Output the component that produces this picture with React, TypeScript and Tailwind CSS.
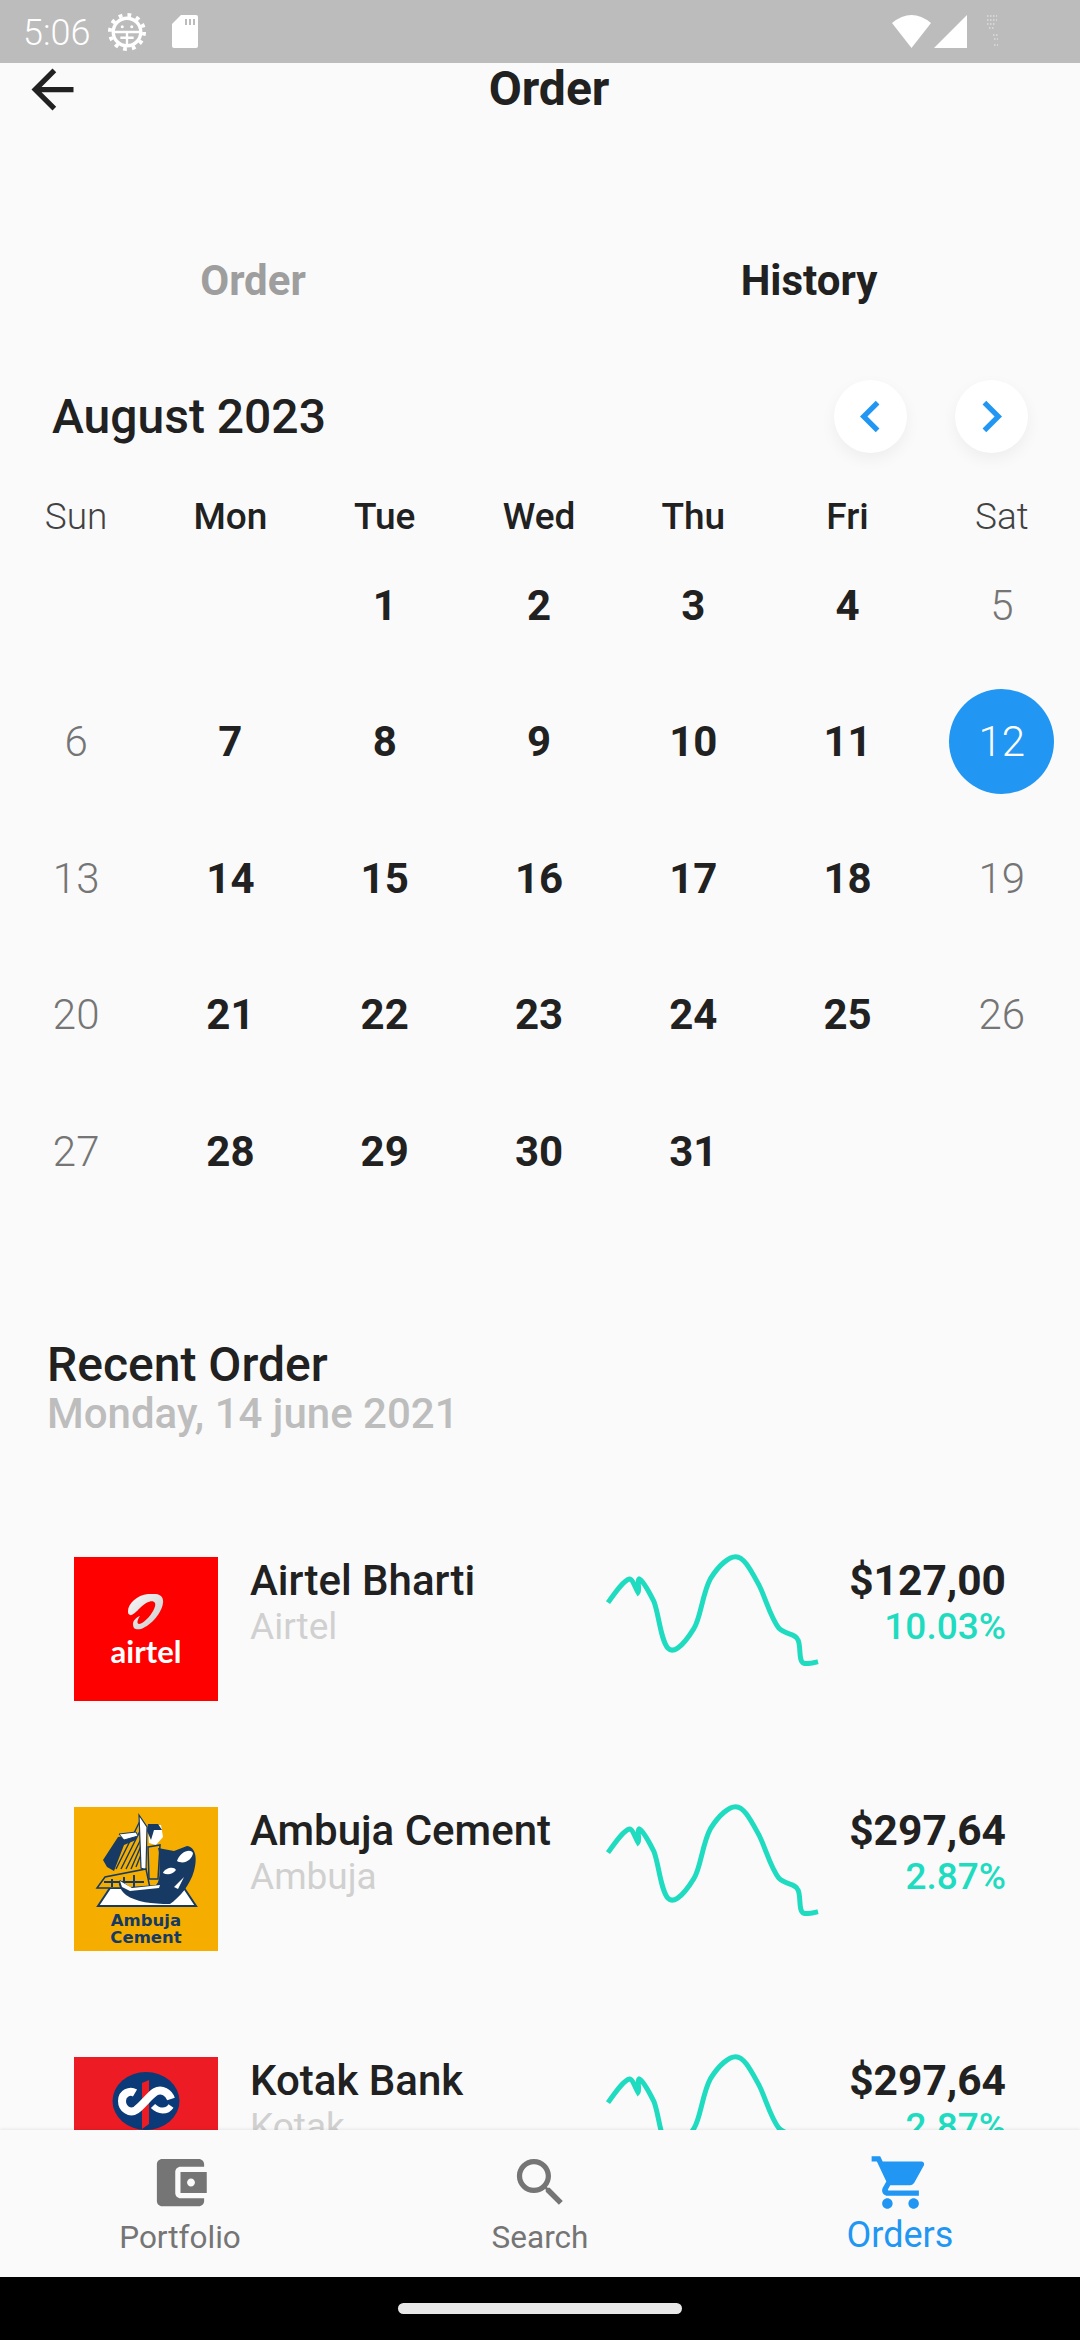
import React from "react";

const weeks: (number | null)[][] = [
  [null, null, 1, 2, 3, 4, 5],
  [6, 7, 8, 9, 10, 11, 12],
  [13, 14, 15, 16, 17, 18, 19],
  [20, 21, 22, 23, 24, 25, 26],
  [27, 28, 29, 30, 31, null, null],
];

const weekdays = ["Sun", "Mon", "Tue", "Wed", "Thu", "Fri", "Sat"];

function MdIcon({ d, className }: { d: string; className: string }) {
  return (
    <svg viewBox="0 0 24 24" className={className} fill="currentColor">
      <path d={d} />
    </svg>
  );
}

function StatusBar() {
  return (
    <div className="flex h-[63px] shrink-0 items-center bg-[#bcbcbc] pl-[23px] text-white">
      <span className="mt-[2px] w-[85px] text-[36px] font-light leading-none">5:06</span>
      {/* debug-style android gear */}
      <svg viewBox="0 0 40 40" className="h-[38px] w-[38px] shrink-0">
        <circle cx="20" cy="20" r="14.5" fill="none" stroke="white" strokeWidth="3.5" />
        <circle cx="20" cy="20" r="18" fill="none" stroke="white" strokeWidth="4" strokeDasharray="4 5.42" />
        <path d="M6 20h28M20 20v14M13 26h14" stroke="white" strokeWidth="2.5" fill="none" />
        <circle cx="15" cy="14.5" r="1.6" fill="white" />
        <circle cx="25" cy="14.5" r="1.6" fill="white" />
      </svg>
      <svg viewBox="0 0 26 33" className="ml-[26px] h-[33px] w-[26px] shrink-0">
        <path d="M9 0h15a2 2 0 0 1 2 2v29a2 2 0 0 1-2 2H2a2 2 0 0 1-2-2V9z" fill="white" />
        <path d="M13 4h2v6h-2zM17 4h2v6h-2zM21 4h2v6h-2z" fill="#bcbcbc" />
      </svg>
      <div className="ml-auto flex items-center pr-[79px]">
        <svg viewBox="0 0 39 33" className="h-[33px] w-[39px]">
          <path d="M0 8Q19.500 -8 39 8L19.500 33z" fill="white" />
        </svg>
        <svg viewBox="0 0 33 33" className="ml-[3px] h-[33px] w-[33px]">
          <path d="M33 0v33H0z" fill="white" />
        </svg>
        <svg viewBox="0 0 15 33" className="ml-[19px] h-[33px] w-[15px]">
          <path d="M1 1h10M1 5h10M1 9h9M3 13h6M7 20h6M8 24h4M8 30h4" stroke="white" strokeOpacity="0.5" strokeWidth="1.5" strokeDasharray="1.500 1.500" />
        </svg>
      </div>
    </div>
  );
}

function Sparkline() {
  return (
    <svg viewBox="70 60 650 350" className="-mt-[7px] ml-[354px] h-[116.67px] w-[216.67px] shrink-0" fill="none">
      <path
        d="M82 218C105 185 130 150 147 147C155 147 165 175 172 187C178 180 168 150 175 147C185 150 205 185 220 215C235 255 240 330 262 355C275 368 300 360 340 295C360 265 365 190 390 145C415 105 445 80 465 80C490 80 510 120 535 165C555 205 570 265 595 295C615 315 645 310 652 330C662 350 652 395 670 400C685 403 700 398 712 395"
        stroke="#1fdcc0"
        strokeWidth="15"
      />
    </svg>
  );
}

function AirtelLogo() {
  return (
    <div className="flex h-[144px] w-[144px] shrink-0 flex-col items-center bg-[#ff0000]">
      <svg viewBox="0 0 36 36" className="mt-[37px] h-[36px] w-[36px] shrink-0">
        <defs>
          <linearGradient id="swoosh" x1="0" y1="0" x2="1" y2="1">
            <stop offset="0" stopColor="#fafafa" />
            <stop offset="1" stopColor="#c8c8c8" />
          </linearGradient>
        </defs>
        <path
          d="M0 17C0 10 9 1 20 0C30-1 36 1 35 9C34 18 24 31 13 35C8 36 5 35 5 30C5 26 9 23 12 22C10 25 8 29 11 30C18 29 29 14 27 9C25 5 18 8 12 14C8 18 4 22 2 21C0 20 0 19 0 17Z"
          fill="url(#swoosh)"
        />
      </svg>
      <span className="mt-[3px] font-['Lato'] text-[31px] font-bold leading-[36px] text-white">airtel</span>
    </div>
  );
}

function AmbujaLogo() {
  return (
    <div className="flex h-[144px] w-[144px] shrink-0 flex-col items-center bg-[#f5ae00]">
      <svg viewBox="0 0 144 105" className="h-[105px] w-[144px] shrink-0">
        <path d="M24 99 36 81H110L122 99Z" fill="white" stroke="#163a63" strokeWidth="2" />
        <path d="M32 56 65 8 73 20 72 63 37 67Z" fill="#f5ae00" />
        <path d="M29 53 44 30 62 28 62 33 50 38 40 64 33 60Z" fill="#163a63" />
        <path d="M42 62 66 14M47 62 68 20M52 62 70 26M57 62 70 32M62 60 70 40" stroke="#163a63" strokeWidth="1.4" />
        <path d="M65 8 73 20 72 63 67 61Z" fill="white" stroke="#163a63" strokeWidth="1.2" />
        <path d="M45 27 62 25 64 29 50 33Z" fill="white" stroke="#163a63" strokeWidth="1" />
        <path d="M23 81 31 70 72 62 76 81Z" fill="#f5ae00" stroke="#163a63" strokeWidth="1.5" />
        <path d="M30 75H70M38 72V80M50 70V80M60 68V80" stroke="#163a63" strokeWidth="2" />
        <path d="M74 18 87 18 89 30 82 38 75 36Z" fill="white" />
        <path d="M73 24 74 17 84 17 88 23 80 23 77 33Z" fill="#163a63" />
        <path d="M74 40 86 38 84 72 75 72Z" fill="#f5ae00" stroke="#163a63" strokeWidth="1.5" />
        <path d="M84 41 100 44 113 39C121 40 124 50 120 64 116 78 106 90 96 97 78 97 62 95 52 88 46 83 43 76 46 73L56 80 82 78C88 72 84 58 86 50Z" fill="#163a63" />
        <path d="M103 54C106 45 116 41 119 46 118 53 110 58 103 54ZM89 66C91 61 100 59 102 63 98 68 93 68 89 66ZM100 80 110 70 104 82ZM46 74 58 81 86 78 85 81 56 84 48 80Z" fill="white" />
      </svg>
      <span className="font-['DejaVu_Sans'] text-[16.5px] font-bold leading-[17px] text-[#163a63]">Ambuja</span>
      <span className="font-['DejaVu_Sans'] text-[16.5px] font-bold leading-[17px] text-[#163a63]">Cement</span>
    </div>
  );
}

function KotakLogo() {
  return (
    <div className="h-[144px] w-[144px] shrink-0 bg-[#ed1c24] pt-[15px]">
      <svg viewBox="0 0 144 60" className="h-[60px] w-[144px]" fill="none">
        <ellipse cx="72" cy="29" rx="33.500" ry="29" fill="#0a3a78" />
        <path d="M68 11 75 8V52L68 57Z" fill="#ed1c24" />
        <path
          d="M61 21C56 18 48 21 48 29 48 37 56 42 62 38 69 33 74 25 81 20 88 16 95 21 97 27"
          stroke="white"
          strokeWidth="8"
        />
        <path d="M97 34C93 40 85 40 79 34" stroke="white" strokeWidth="6" />
      </svg>
    </div>
  );
}

function StockRow({
  logo,
  name,
  sub,
  price,
  change,
}: {
  logo: React.ReactNode;
  name: string;
  sub: string;
  price: string;
  change: string;
}) {
  return (
    <div className="relative flex h-[144px] items-start pl-[74px] font-['Roboto']">
      {logo}
      <div className="ml-[32px] w-0">
        <div className="whitespace-nowrap text-[42px] font-medium leading-[48px] text-[#212121]">{name}</div>
        <div className="mt-[2px] whitespace-nowrap text-[37px] leading-[40px] text-[#d0d0d0]">{sub}</div>
      </div>
      <Sparkline />
      <div className="ml-auto pr-[74px] text-right">
        <div className="whitespace-nowrap text-[42.5px] font-bold leading-[48px] text-[#212121]">{price}</div>
        <div className="mt-[2px] whitespace-nowrap text-[37px] font-medium leading-[40px] text-[#1fdcc0]">{change}</div>
      </div>
    </div>
  );
}

function NavItem({ d, label, active }: { d: string; label: string; active?: boolean }) {
  return (
    <div className={`flex w-[360px] flex-col items-center ${active ? "text-[#2196f3]" : "text-[#757575]"}`}>
      <MdIcon d={d} className="h-[63px] w-[63px]" />
      <span className={active ? "-mt-[1px] text-[36px] leading-[44px]" : "mt-[2px] text-[31.5px] leading-[44px]"}>{label}</span>
    </div>
  );
}

export default function App() {
  return (
    <div className="flex h-[2340px] w-[1080px] flex-col overflow-hidden bg-[#fafafa] font-['Roboto'] text-[#212121]">
      <StatusBar />

      <div className="min-h-0 flex-1 overflow-hidden">
        <div className="flex h-[52px] items-center pl-[21px] pr-[66px]">
          <MdIcon
            d="M20 11H7.83l5.59-5.59L12 4l-8 8 8 8 1.41-1.41L7.83 13H20v-2z"
            className="h-[63px] w-[63px] shrink-0"
          />
          <div className="flex-1 text-center text-[48px] font-bold leading-[50px]">Order</div>
        </div>

        <div className="mt-[135px] flex h-[60px] items-center text-center text-[42px] font-bold">
          <div className="w-[506px] shrink-0 text-[#9e9e9e]">Order</div>
          <div className="w-[606px] shrink-0">History</div>
        </div>

        <div className="mt-[70px] flex h-[73px] items-center pl-[52px] pr-[52px]">
          <div className="flex-1 text-[48px] font-medium leading-[50px]">August 2023</div>
          <button className="flex h-[73px] w-[73px] items-center justify-center rounded-full bg-white text-[#2196f3] shadow-[0_6px_16px_rgba(0,0,0,0.05)]">
            <MdIcon d="M15.41 7.41L14 6l-6 6 6 6 1.41-1.41L10.83 12z" className="h-[63px] w-[63px] shrink-0" />
          </button>
          <button className="ml-[48px] flex h-[73px] w-[73px] items-center justify-center rounded-full bg-white text-[#2196f3] shadow-[0_6px_16px_rgba(0,0,0,0.05)]">
            <MdIcon d="M10 6L8.59 7.41 13.17 12l-4.58 4.59L10 18l6-6z" className="h-[63px] w-[63px] shrink-0" />
          </button>
        </div>

        <div className="-ml-px mt-[43px] grid h-[41px] w-[1080px] grid-cols-7 items-center text-center text-[37px] leading-[42px]">
          {weekdays.map((day, i) => (
            <div key={day} className={i === 0 || i === 6 ? "font-light text-[#424242]" : "font-medium"}>
              {day}
            </div>
          ))}
        </div>

        <div className="-ml-px grid w-[1080px] grid-cols-7 auto-rows-[136.5px] items-center text-center text-[42px]">
          {weeks.flat().map((day, i) => {
            const weekend = i % 7 === 0 || i % 7 === 6;
            if (day === 12) {
              return (
                <div key={i} className="flex justify-center">
                  <div className="flex h-[105px] w-[105px] items-center justify-center rounded-full bg-[#2196f3] font-light text-white">
                    {day}
                  </div>
                </div>
              );
            }
            return (
              <div key={i} className={weekend ? "font-light text-[#757575]" : "font-bold"}>
                {day}
              </div>
            );
          })}
        </div>

        <div className="ml-[47px] mt-[120px] text-[48px] font-medium leading-[50px]">Recent Order</div>
        <div className="ml-[47px] text-[42px] font-medium leading-[48px] text-[#bdbdbd]">Monday, 14 june 2021</div>

        <div className="mt-[119px] flex flex-col gap-[106px]">
          <StockRow logo={<AirtelLogo />} name="Airtel Bharti" sub="Airtel" price="$127,00" change="10.03%" />
          <StockRow logo={<AmbujaLogo />} name="Ambuja Cement" sub="Ambuja" price="$297,64" change="2.87%" />
          <StockRow logo={<KotakLogo />} name="Kotak Bank" sub="Kotak" price="$297,64" change="2.87%" />
        </div>
      </div>

      <nav className="z-10 flex h-[147px] shrink-0 items-start bg-[#fafafa] pt-[21px] shadow-[0_-1px_3px_rgba(0,0,0,0.08)]">
        <NavItem
          label="Portfolio"
          d="M21 18v1c0 1.1-.9 2-2 2H5c-1.11 0-2-.9-2-2V5c0-1.1.89-2 2-2h14c1.1 0 2 .9 2 2v1h-9c-1.11 0-2 .9-2 2v8c0 1.1.89 2 2 2h9zm-9-2h10V8H12v8zm4-2.5c-.83 0-1.5-.67-1.5-1.5s.67-1.5 1.5-1.5 1.5.67 1.500 1.5-.67 1.5-1.5 1.5z"
        />
        <NavItem
          label="Search"
          d="M15.5 14h-.79l-.28-.27C15.41 12.59 16 11.11 16 9.5 16 5.91 13.09 3 9.5 3S3 5.91 3 9.5 5.91 16 9.5 16c1.61 0 3.09-.59 4.23-1.57l.27.28v.79l5 4.99L20.49 19l-4.99-5zm-6 0C7.01 14 5 11.99 5 9.5S7.01 5 9.5 5 14 7.01 14 9.5 11.99 14 9.5 14z"
        />
        <NavItem
          active
          label="Orders"
          d="M7 18c-1.1 0-1.99.9-1.99 2S5.9 22 7 22s2-.9 2-2-.9-2-2-2zM1 2v2h2l3.6 7.59-1.35 2.45c-.16.28-.25.61-.25.96 0 1.1.9 2 2 2h12v-2H7.42c-.14 0-.25-.11-.25-.25l.03-.12.9-1.63h7.45c.75 0 1.41-.41 1.75-1.03l3.58-6.49c.08-.14.12-.31.12-.48 0-.55-.45-1-1-1H5.21l-.94-2H1zm16 16c-1.1 0-1.99.9-1.99 2s.89 2 1.99 2 2-.9 2-2-.9-2-2-2z"
        />
      </nav>

      <div className="flex h-[63px] shrink-0 items-center justify-center bg-black">
        <div className="h-[11px] w-[284px] rounded-full bg-[#e8e8e8]" />
      </div>
    </div>
  );
}
